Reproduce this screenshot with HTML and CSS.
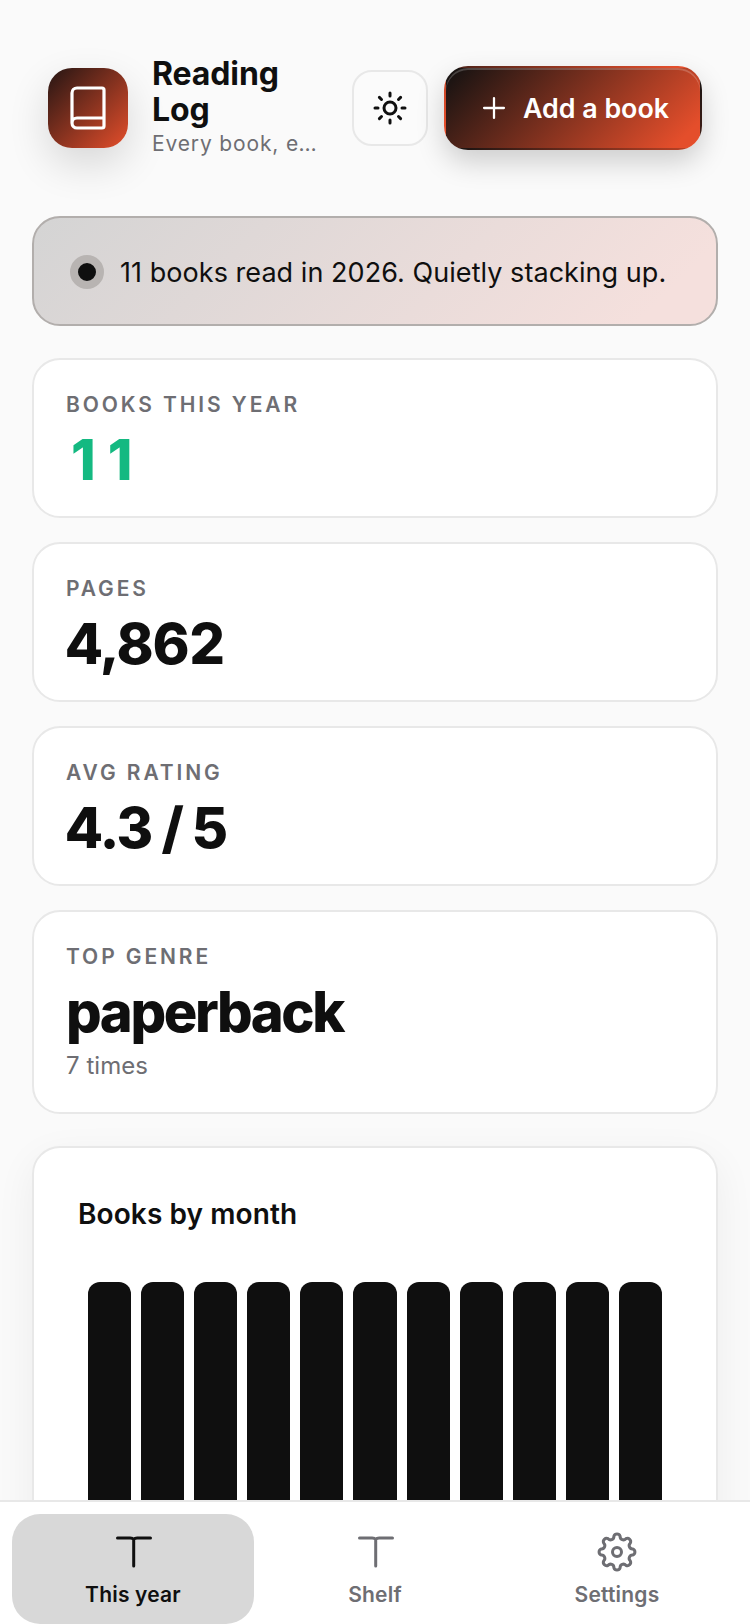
FILE: index.html
```html
<!DOCTYPE html>
<html lang="en">
<head>
    <meta charset="UTF-8">
    <meta name="viewport" content="width=device-width, initial-scale=1.0">
    <title>Reading Log</title>
    <link rel="stylesheet" href="styles.css">
</head>
<body>
    <div class="app">
        <main class="content">
            <!-- Header -->
            <header class="topbar">
                <div class="logo">
                    <svg class="icon-logo" viewBox="0 0 24 24"><path d="M4 19.5v-15A2.5 2.5 0 0 1 6.5 2H19a1 1 0 0 1 1 1v18a1 1 0 0 1-1 1H6.5a1 1 0 0 1 0-5H20"/></svg>
                </div>
                <div class="brand">
                    <h1>Reading Log</h1>
                    <p>Every book, every page</p>
                </div>
                <button class="theme-btn">
                    <svg class="icon-sun" viewBox="0 0 24 24"><circle cx="12" cy="12" r="4"/><path d="M12 2v2M12 20v2M4.93 4.93l1.41 1.41M17.66 17.66l1.41 1.41M2 12h2M20 12h2M6.34 17.66l-1.41 1.41M19.07 4.93l-1.41 1.41"/></svg>
                </button>
                <button class="add-btn">
                    <svg class="icon-plus" viewBox="0 0 24 24"><path d="M5 12h14M12 5v14"/></svg>
                    Add a book
                </button>
            </header>

            <!-- Banner -->
            <div class="banner">
                <span class="dot"></span>
                <span>11 books read in 2026. Quietly stacking up.</span>
            </div>

            <!-- Stats -->
            <section class="card stat">
                <div class="stat-label">BOOKS THIS YEAR</div>
                <div class="stat-value green">11</div>
            </section>
            <section class="card stat">
                <div class="stat-label">PAGES</div>
                <div class="stat-value">4,862</div>
            </section>
            <section class="card stat">
                <div class="stat-label">AVG RATING</div>
                <div class="stat-value">4.3 / 5</div>
            </section>
            <section class="card stat">
                <div class="stat-label">TOP GENRE</div>
                <div class="stat-value word">paperback</div>
                <div class="stat-note">7 times</div>
            </section>

            <!-- Chart -->
            <section class="card chart">
                <h2>Books by month</h2>
                <div class="bars">
                    <div class="bar"></div>
                    <div class="bar"></div>
                    <div class="bar"></div>
                    <div class="bar"></div>
                    <div class="bar"></div>
                    <div class="bar"></div>
                    <div class="bar"></div>
                    <div class="bar"></div>
                    <div class="bar"></div>
                    <div class="bar"></div>
                    <div class="bar"></div>
                </div>
            </section>
        </main>

        <!-- Bottom nav -->
        <nav class="tabs">
            <div class="tab active">
                <svg class="icon-tab" viewBox="0 0 48 48"><path d="M8.5 10h12.7q2.5 0 3.5 1.5q1-1.5 3.5-1.5H41.5M24.7 11.5V38"/></svg>
                <span>This year</span>
            </div>
            <div class="tab">
                <svg class="icon-tab" viewBox="0 0 48 48"><path d="M8.5 10h12.7q2.5 0 3.5 1.5q1-1.5 3.5-1.5H41.5M24.7 11.5V38"/></svg>
                <span>Shelf</span>
            </div>
            <div class="tab">
                <svg class="icon-tab" viewBox="0 0 48 48"><path d="M39.69 20.88A3.3 3.3 0 0 1 39.69 27.12A3.3 3.3 0 0 0 37.3 32.89A3.3 3.3 0 0 1 32.89 37.3A3.3 3.3 0 0 0 27.12 39.69A3.3 3.3 0 0 1 20.88 39.69A3.3 3.3 0 0 0 15.11 37.3A3.3 3.3 0 0 1 10.7 32.89A3.3 3.3 0 0 0 8.31 27.12A3.3 3.3 0 0 1 8.31 20.88A3.3 3.3 0 0 0 10.7 15.11A3.3 3.3 0 0 1 15.11 10.7A3.3 3.3 0 0 0 20.88 8.31A3.3 3.3 0 0 1 27.12 8.31A3.3 3.3 0 0 0 32.89 10.7A3.3 3.3 0 0 1 37.3 15.11A3.3 3.3 0 0 0 39.69 20.88Z"/><circle cx="24" cy="24" r="4.5"/></svg>
                <span>Settings</span>
            </div>
        </nav>
    </div>
</body>
</html>
```

FILE: styles.css
```css
* {
    box-sizing: border-box;
}

body {
    margin: 0;
    font-family: 'Inter', sans-serif;
    font-optical-sizing: none;
    color: #0f0f0f;
    background: #fafafa;
}

svg {
    display: block;
    fill: none;
    stroke: currentColor;
    stroke-linecap: round;
    stroke-linejoin: round;
}

.app {
    height: 1624px;
    display: flex;
    flex-direction: column;
    overflow: hidden;
}

.content {
    flex: 1;
    min-height: 0;
    overflow: hidden;
    padding: 66px 32px 0;
}

/* Header */
.topbar {
    display: flex;
    align-items: center;
    height: 84px;
    padding-left: 16px;
    margin-bottom: 66px;
}

.logo {
    flex: none;
    width: 80px;
    height: 80px;
    border-radius: 24px;
    color: #fff;
    background: linear-gradient(135deg, #241513, #e44e2b);
    box-shadow: 0 16px 40px rgba(0, 0, 0, 0.14);
    display: flex;
    align-items: center;
    justify-content: center;
}

.icon-logo {
    width: 48px;
    height: 48px;
    stroke-width: 1.6;
}

.brand {
    width: 170px;
    margin-left: 24px;
    margin-right: 30px;
    padding-bottom: 4px;
    flex: none;
}

.brand h1 {
    margin: 0 0 3px;
    font-size: 32px;
    line-height: 36px;
    font-weight: 700;
    letter-spacing: -0.1px;
}

.brand p {
    margin: 0;
    font-size: 21px;
    line-height: 26px;
    color: #6e6e73;
    letter-spacing: 0.85px;
    white-space: nowrap;
    overflow: hidden;
    text-overflow: ellipsis;
}

.theme-btn {
    flex: none;
    width: 76px;
    height: 76px;
    padding: 0;
    border: 2px solid #e8e8e8;
    border-radius: 20px;
    background: #fbfbfb;
    color: #0f0f0f;
    display: flex;
    align-items: center;
    justify-content: center;
}

.icon-sun {
    width: 36px;
    height: 36px;
    stroke-width: 2;
}

.add-btn {
    flex: none;
    width: 258px;
    height: 84px;
    margin-left: 16px;
    padding: 0;
    /* transparent border lets the gradient wrap round at the edges */
    border: 2px solid transparent;
    border-radius: 24px;
    background: linear-gradient(135deg, #111, #e44e2b 92%);
    box-shadow: 0 12px 28px rgba(0, 0, 0, 0.18), inset 0 2px 0 rgba(255, 255, 255, 0.2);
    color: #fff;
    font-family: inherit;
    font-size: 26.8px;
    font-weight: 600;
    display: flex;
    align-items: center;
    justify-content: center;
    gap: 12px;
}

.icon-plus {
    width: 34px;
    height: 34px;
    stroke-width: 1.6;
}

/* Banner */
.banner {
    height: 110px;
    border: 2px solid #b2aeac;
    border-radius: 28px;
    background: linear-gradient(135deg, #d4d4d4 0%, #f5e0dd 90%);
    display: flex;
    align-items: center;
    padding: 2px 0 0 36px;
    gap: 16px;
    font-size: 27px;
    letter-spacing: 0.05px;
    margin-bottom: 32px;
}

.dot {
    flex: none;
    width: 34px;
    height: 34px;
    border: 8px solid #b8b4b2;
    border-radius: 50%;
    background: #0f0f0f;
}

/* Cards */
.card {
    background: #fff;
    border: 2px solid #e8e8e8;
    border-radius: 28px;
}

.stat {
    padding: 33px 32px 0;
    height: 160px;
    margin-bottom: 24px;
}

.stat:nth-of-type(4) {
    height: 204px;
    margin-bottom: 32px;
}

.stat-label {
    font-size: 21px;
    line-height: 24px;
    font-weight: 600;
    letter-spacing: 2.9px;
    color: #6e6e73;
}

.stat-value {
    margin-top: 11px;
    font-size: 56px;
    line-height: 64px;
    font-weight: 800;
    letter-spacing: -0.1px;
    word-spacing: -6.5px;
    font-variant-numeric: tabular-nums;
}

.stat-value.word {
    letter-spacing: -2.4px;
}

/* plain figures here: the tabular 1 has a foot the design doesn't */
.stat-value.green {
    color: #14b981;
    padding-left: 5px;
    letter-spacing: 12px;
    font-variant-numeric: normal;
}

.stat-note {
    margin-top: 8px;
    font-size: 24px;
    line-height: 28px;
    letter-spacing: 0.05px;
    color: #6e6e73;
}

.chart {
    padding: 49px 44px 0;
    height: 520px;
    box-shadow: 0 12px 40px rgba(0, 0, 0, 0.06);
}

.chart h2 {
    margin: 0 0 51px;
    font-size: 28px;
    line-height: 34px;
    font-weight: 600;
    letter-spacing: 0.1px;
}

.bars {
    display: flex;
    gap: 10px;
    padding-left: 10px;
}

.bar {
    width: 43.1px;
    height: 300px;
    background: #0f0f0f;
    border-radius: 12px 12px 0 0;
}

/* Bottom nav */
.tabs {
    flex: none;
    height: 124px;
    background: #fff;
    border-top: 2px solid #e8e8e8;
    padding: 12px 12px 0;
    display: grid;
    grid-template-columns: repeat(3, 1fr);
}

.tab {
    border-radius: 28px;
    color: #6e6e73;
    font-size: 21px;
    line-height: 24px;
    font-weight: 600;
    letter-spacing: 0.2px;
    display: flex;
    flex-direction: column;
    align-items: center;
    padding-top: 14px;
    gap: 7px;
}

.tab.active {
    background: #d8d8d8;
    color: #0f0f0f;
}

.icon-tab {
    width: 48px;
    height: 48px;
    stroke-width: 3;
}
```
